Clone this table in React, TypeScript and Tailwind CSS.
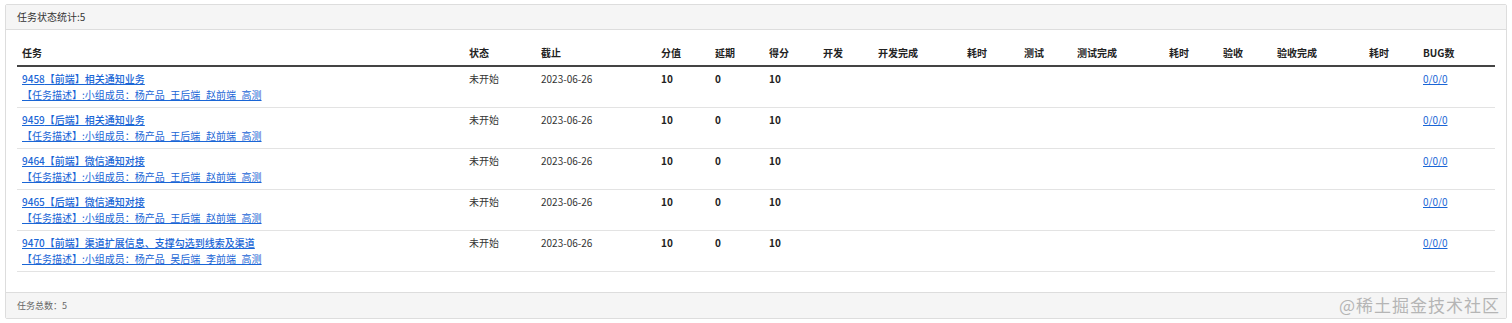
import React from "react";

interface Task {
  id: number;
  title: string;
  desc: string;
  status: string;
  deadline: string;
  score: number;
  delay: number;
  got: number;
}

const tasks: Task[] = [
  { id: 9458, title: "【前端】相关通知业务", desc: "【任务描述】:小组成员：杨产品_王后端_赵前端_高测", status: "未开始", deadline: "2023-06-26", score: 10, delay: 0, got: 10 },
  { id: 9459, title: "【后端】相关通知业务", desc: "【任务描述】:小组成员：杨产品_王后端_赵前端_高测", status: "未开始", deadline: "2023-06-26", score: 10, delay: 0, got: 10 },
  { id: 9464, title: "【前端】微信通知对接", desc: "【任务描述】:小组成员：杨产品_王后端_赵前端_高测", status: "未开始", deadline: "2023-06-26", score: 10, delay: 0, got: 10 },
  { id: 9465, title: "【后端】微信通知对接", desc: "【任务描述】:小组成员：杨产品_王后端_赵前端_高测", status: "未开始", deadline: "2023-06-26", score: 10, delay: 0, got: 10 },
  { id: 9470, title: "【前端】渠道扩展信息、支撑勾选到线索及渠道", desc: "【任务描述】:小组成员：杨产品_吴后端_李前端_高测", status: "未开始", deadline: "2023-06-26", score: 10, delay: 0, got: 10 },
];

const columns = [
  { label: "任务", w: "w-[447px]" },
  { label: "状态", w: "w-[72px]" },
  { label: "截止", w: "w-[120px]" },
  { label: "分值", w: "w-[54px]" },
  { label: "延期", w: "w-[54px]" },
  { label: "得分", w: "w-[54px]" },
  { label: "开发", w: "w-[55px]" },
  { label: "开发完成", w: "w-[89px]" },
  { label: "耗时", w: "w-[57px]" },
  { label: "测试", w: "w-[53px]" },
  { label: "测试完成", w: "w-[92px]" },
  { label: "耗时", w: "w-[54px]" },
  { label: "验收", w: "w-[54px]" },
  { label: "验收完成", w: "w-[92px]" },
  { label: "耗时", w: "w-[54px]" },
  { label: "BUG数", w: "w-[77px]" },
];

export default function App() {
  return (
    <div className="w-[1512px] h-[323px] bg-white pt-[4px] px-[5px] font-['Noto_Sans_CJK_SC',sans-serif] text-[#333]">
      <div className="relative border border-[#ddd] rounded-[2px] bg-white">
        <div className="h-[25px] bg-[#f5f5f5] border-b border-[#ddd] px-[11px] flex items-center text-[10px] leading-[16px]">
          任务状态统计:5
        </div>
        <div className="px-[11px] pt-[11px] pb-[20px]">
          <table className="w-[1478px] table-fixed border-collapse text-[10px] leading-[16px]">
            <colgroup>
              {columns.map((c, i) => (
                <col key={i} className={c.w} />
              ))}
            </colgroup>
            <thead>
              <tr className="border-b-2 border-[#444]">
                {columns.map((c, i) => (
                  <th key={i} className="px-[5px] pt-[4px] pb-[4px] text-left font-bold text-[#222]">
                    {c.label}
                  </th>
                ))}
              </tr>
            </thead>
            <tbody>
              {tasks.map((t) => (
                <tr key={t.id} className="border-b border-[#e3e3e3] align-top">
                  <td className="px-[5px] py-[4px]">
                    <a href="#" className="block text-[#1a66d6] underline font-medium">
                      {t.id}
                      {t.title}
                    </a>
                    <a href="#" className="block text-[#1a66d6] underline">
                      {t.desc}
                    </a>
                  </td>
                  <td className="px-[5px] py-[4px]">{t.status}</td>
                  <td className="px-[5px] py-[4px]">{t.deadline}</td>
                  <td className="px-[5px] py-[4px] font-bold text-[#222]">{t.score}</td>
                  <td className="px-[5px] py-[4px] font-bold text-[#222]">{t.delay}</td>
                  <td className="px-[5px] py-[4px] font-bold text-[#222]">{t.got}</td>
                  <td className="px-[5px] py-[4px]"></td>
                  <td className="px-[5px] py-[4px]"></td>
                  <td className="px-[5px] py-[4px]"></td>
                  <td className="px-[5px] py-[4px]"></td>
                  <td className="px-[5px] py-[4px]"></td>
                  <td className="px-[5px] py-[4px]"></td>
                  <td className="px-[5px] py-[4px]"></td>
                  <td className="px-[5px] py-[4px]"></td>
                  <td className="px-[5px] py-[4px]"></td>
                  <td className="px-[5px] py-[4px]">
                    <a href="#" className="text-[#1a66d6] underline">
                      0/0/0
                    </a>
                  </td>
                </tr>
              ))}
            </tbody>
          </table>
        </div>
        <div className="h-[26px] bg-[#f5f5f5] border-t border-[#ddd] px-[11px] flex items-center text-[9px] text-[#666]">
          任务总数：5
        </div>
        <div className="absolute right-[6px] bottom-[1px] text-[17px] leading-[24px] text-[#b5b5b5] tracking-[1px]">
          @稀土掘金技术社区
        </div>
      </div>
    </div>
  );
}
